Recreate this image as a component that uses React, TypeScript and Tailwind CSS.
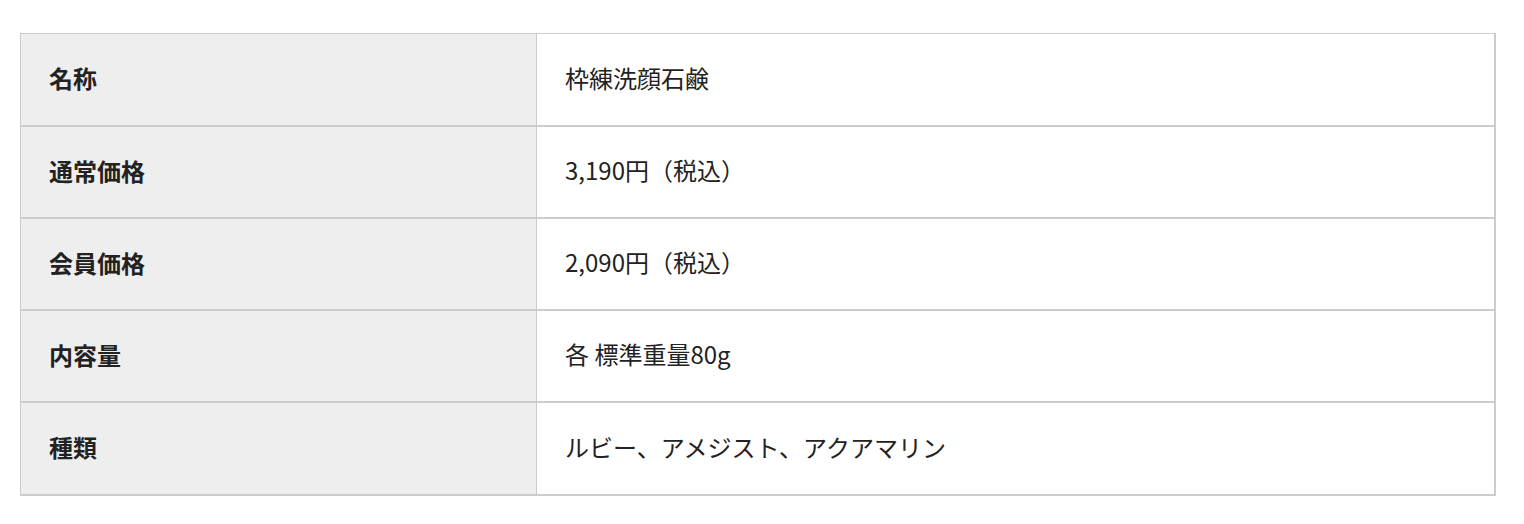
import React from "react";

const rows: [string, string, string][] = [
  ["名称", "枠練洗顔石鹸", "h-[93px]"],
  ["通常価格", "3,190円（税込）", "h-[92px]"],
  ["会員価格", "2,090円（税込）", "h-[92px]"],
  ["内容量", "各 標準重量80g", "h-[92px]"],
  ["種類", "ルビー、アメジスト、アクアマリン", "h-[93px]"],
];

export default function App() {
  return (
    <div
      className="w-[1524px] h-[524px] bg-white pt-[33px] pl-[20px]"
      style={{ fontFamily: '"Noto Sans CJK JP", "Noto Sans", sans-serif' }}
    >
      <div className="w-[1476px] border-t border-l border-r-2 border-[#cccccc] text-[#222222]">
        {rows.map(([k, v, h]) => (
          <div key={k} className={`flex ${h} border-b-2 border-[#cccccc]`}>
            <div className="w-[516px] shrink-0 bg-[#eeeeee] border-r border-[#cccccc] flex items-center pl-[28px] pb-[3px] text-[24px] font-bold leading-none">
              {k}
            </div>
            <div className="flex-1 flex items-center pl-[28px] pb-[4px] text-[24px] leading-none">
              {v}
            </div>
          </div>
        ))}
      </div>
    </div>
  );
}
